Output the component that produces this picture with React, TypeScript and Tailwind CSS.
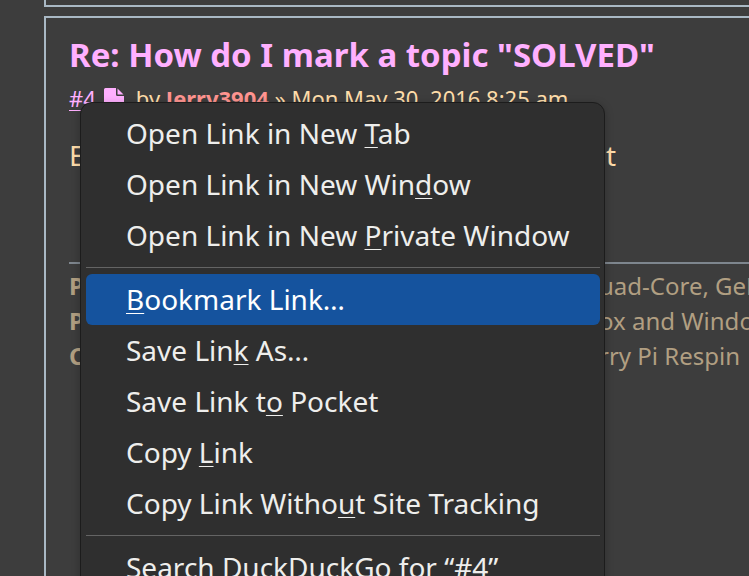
import { Fragment } from "react"

const menuGroups = [
  [
    { before: "Open Link in New ", key: "T", after: "ab" },
    { before: "Open Link in New Win", key: "d", after: "ow" },
    { before: "Open Link in New ", key: "P", after: "rivate Window" },
  ],
  [
    { before: "", key: "B", after: "ookmark Link…", active: true },
    { before: "Save Lin", key: "k", after: " As…" },
    { before: "Save Link t", key: "o", after: " Pocket" },
    { before: "Copy ", key: "L", after: "ink" },
    { before: "Copy Link Witho", key: "u", after: "t Site Tracking" },
  ],
  [{ before: "Search DuckDuckGo for “#4”", key: "", after: "" }],
]

const signature = [
  { label: "P", text: "uad-Core, GeForce" },
  { label: "P", text: "ox and Windows" },
  { label: "C", text: "rry Pi Respin" },
]

function FileIcon() {
  return (
    <svg viewBox="0 0 20 24" className="h-6 w-5" fill="#ffb0ff" aria-hidden="true">
      <path d="M1.5 0H12v6.500a1.500 1.500 0 0 0 1.500 1.500H20V22.500a1.500 1.500 0 0 1-1.500 1.500h-17A1.500 1.500 0 0 1 0 22.500V1.500A1.500 1.500 0 0 1 1.500 0z" />
      <path d="M13.500 0.500 19.500 6.500h-6z" />
    </svg>
  )
}

function Post() {
  return (
    <article className="h-[700px] border-2 border-r-0 border-[#a9b8c4] pl-[23px] pt-[13px]">
      <h3 className="text-[33px] font-bold leading-[48px] text-[#ffb0ff]">
        Re: How do I mark a topic "SOLVED"
      </h3>
      <p className="mt-[3px] flex h-8 items-center text-[22px] leading-8 text-[#ffddaa]">
        <a href="#4" className="text-[#ffb0ff] underline decoration-1 underline-offset-[3px]">#4</a>
        <a href="#4" aria-label="Post" className="ml-2 mr-3 mt-1">
          <FileIcon />
        </a>
        <span>
          by{" "}
          <a href="#author" className="font-bold text-[#ff9490]">Jerry3904</a>
          {" » Mon May 30, 2016 8:25 am"}
        </span>
      </p>
      <p className="mt-[21px] flex text-[28px] leading-10 text-[#ffddaa]">
        <span className="w-[537px]">E</span>
        <span>t</span>
      </p>
      <div className="mt-[87px] border-t-2 border-[#7e868e] pt-1 text-2xl leading-[35px] text-[#b19f82]">
        {signature.map((line) => (
          <div key={line.text} className="flex whitespace-nowrap">
            <b className="w-[530px] shrink-0">{line.label}</b>
            <span>{line.text}</span>
          </div>
        ))}
      </div>
    </article>
  )
}

function ContextMenu() {
  return (
    <div
      role="menu"
      className="absolute left-20 top-[102px] w-[525px] rounded-t-xl border border-[#1c1c1c] bg-[#2f2f2f] py-[5px] pl-[5px] pr-1 shadow-[0_2px_8px_rgba(0,0,0,0.25)]"
    >
      {menuGroups.map((group, i) => (
        <Fragment key={i}>
          {i > 0 && <hr className="my-1.5 border-[#646464]" />}
          {group.map((item) => (
            <button
              key={item.before + item.key}
              role="menuitem"
              className={`block h-[51px] w-full rounded-md pl-10 text-left text-[28px] leading-[51px] ${
                item.active ? "bg-[#15539e] text-white" : "text-[#eeeeec]"
              }`}
            >
              {item.before}
              <span className="underline decoration-1 underline-offset-[3px] [text-decoration-skip-ink:none]">
                {item.key}
              </span>
              {item.after}
            </button>
          ))}
        </Fragment>
      ))}
    </div>
  )
}

export default function App() {
  return (
    <main className="relative h-screen overflow-hidden bg-[#3d3d3d] pl-11 font-['Noto_Sans',sans-serif]">
      <div className="mb-[9px] h-[7px] border-b-2 border-l-2 border-[#a9b8c4]" />
      <Post />
      <ContextMenu />
    </main>
  )
}
